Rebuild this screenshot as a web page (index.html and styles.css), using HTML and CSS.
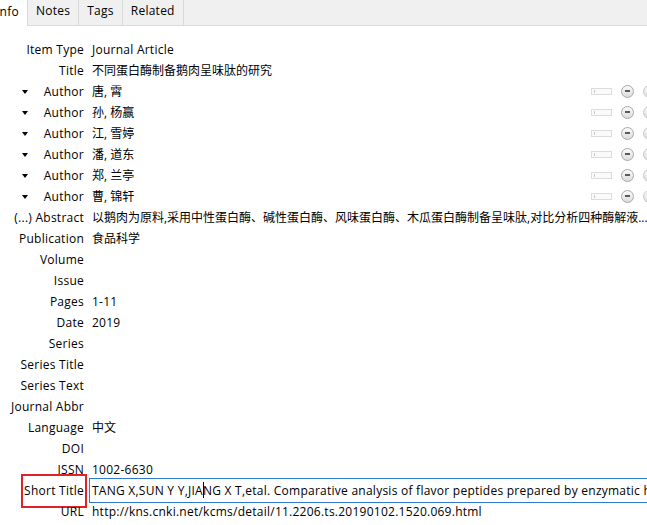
FILE: index.html
```html
<!DOCTYPE html>
<html>
<head>
<meta charset="utf-8">
<link rel="stylesheet" href="styles.css">
</head>
<body>
<div class="pane">
  <div class="tabbar">
    <div class="tab active"><span class="info-label">Info</span></div>
    <div class="tab">Notes</div>
    <div class="tab">Tags</div>
    <div class="tab">Related</div>
  </div>
  <div class="fields">
    <div class="row"><div class="label">Item Type</div><div class="value latin">Journal Article</div></div>
    <div class="row"><div class="label">Title</div><div class="value">不同蛋白酶制备鹅肉呈味肽的研究</div></div>
    <div class="row"><div class="label creator"><span class="twisty"></span><span>Author</span></div><div class="value author"><span>唐, 霄</span><span class="controls"><span class="mode"></span><span class="btn minus"></span><span class="btn plus"></span></span></div></div>
    <div class="row"><div class="label creator"><span class="twisty"></span><span>Author</span></div><div class="value author"><span>孙, 杨赢</span><span class="controls"><span class="mode"></span><span class="btn minus"></span><span class="btn plus"></span></span></div></div>
    <div class="row"><div class="label creator"><span class="twisty"></span><span>Author</span></div><div class="value author"><span>江, 雪婷</span><span class="controls"><span class="mode"></span><span class="btn minus"></span><span class="btn plus"></span></span></div></div>
    <div class="row"><div class="label creator"><span class="twisty"></span><span>Author</span></div><div class="value author"><span>潘, 道东</span><span class="controls"><span class="mode"></span><span class="btn minus"></span><span class="btn plus"></span></span></div></div>
    <div class="row"><div class="label creator"><span class="twisty"></span><span>Author</span></div><div class="value author"><span>郑, 兰亭</span><span class="controls"><span class="mode"></span><span class="btn minus"></span><span class="btn plus"></span></span></div></div>
    <div class="row"><div class="label creator"><span class="twisty"></span><span>Author</span></div><div class="value author"><span>曹, 锦轩</span><span class="controls"><span class="mode"></span><span class="btn minus"></span><span class="btn plus"></span></span></div></div>
    <div class="row"><div class="label">(...) Abstract</div><div class="value clip">以鹅肉为原料,采用中性蛋白酶、碱性蛋白酶、风味蛋白酶、木瓜蛋白酶制备呈味肽,对比分析四种酶解液...</div></div>
    <div class="row"><div class="label">Publication</div><div class="value">食品科学</div></div>
    <div class="row"><div class="label">Volume</div><div class="value"></div></div>
    <div class="row"><div class="label">Issue</div><div class="value"></div></div>
    <div class="row"><div class="label">Pages</div><div class="value latin">1-11</div></div>
    <div class="row"><div class="label">Date</div><div class="value latin">2019</div></div>
    <div class="row"><div class="label">Series</div><div class="value"></div></div>
    <div class="row"><div class="label">Series Title</div><div class="value"></div></div>
    <div class="row"><div class="label">Series Text</div><div class="value"></div></div>
    <div class="row"><div class="label">Journal Abbr</div><div class="value"></div></div>
    <div class="row"><div class="label">Language</div><div class="value">中文</div></div>
    <div class="row"><div class="label">DOI</div><div class="value"></div></div>
    <div class="row"><div class="label">ISSN</div><div class="value latin">1002-6630</div></div>
    <div class="row"><div class="label"><span class="highlight">Short Title</span></div><div class="value"><div class="editor latin">TANG X,SUN Y Y,JIA<span class="caret"></span>NG X T,etal. Comparative analysis of flavor peptides prepared by enzymatic h</div></div></div>
    <div class="row"><div class="label">URL</div><div class="value latin">http://kns.cnki.net/kcms/detail/11.2206.ts.20190102.1520.069.html</div></div>
  </div>
</div>
</body>
</html>
```
FILE: styles.css
```css
html, body {
  margin: 0;
  padding: 0;
  overflow: hidden;
  background: #ffffff;
}
body {
  width: 647px;
  height: 525px;
  font-family: "Segoe UI", "Open Sans", "Noto Sans CJK SC", sans-serif;
  font-size: 12px;
  color: #000000;
}
.pane {
  width: 690px;
}
.tabbar {
  display: flex;
  height: 25px;
  background: #f0f0f0;
  border-bottom: 1px solid #d9d9d9;
}
.tab {
  display: flex;
  align-items: center;
  padding: 0 8px 3px 8px;
  border-right: 1px solid #d9d9d9;
  line-height: 20px;
  letter-spacing: 0.25px;
}
.tab.active {
  background: #ffffff;
  padding-left: 0;
  height: 23px;
  padding-bottom: 3px;
  overflow: hidden;
  width: 19px;
}
.info-label {
  margin-left: -4px;
}
.fields {
  padding-top: 13px;
  display: flex;
  flex-direction: column;
}
.row {
  display: grid;
  grid-template-columns: 84px 1fr;
  column-gap: 8px;
  height: 21px;
  line-height: 21px;
  white-space: nowrap;
}
.label {
  text-align: right;
  letter-spacing: 0.25px;
}
.latin {
  letter-spacing: 0.25px;
}
.label.creator {
  display: flex;
  justify-content: space-between;
  align-items: center;
  padding-left: 22px;
}
.twisty {
  width: 0;
  height: 0;
  border-left: 3.5px solid transparent;
  border-right: 3.5px solid transparent;
  border-top: 4px solid #000;
}
.value.clip {
  overflow: hidden;
  width: 555px;
}
.value.author {
  display: flex;
  justify-content: space-between;
  align-items: center;
  width: 564px;
}
.controls {
  display: flex;
  align-items: center;
  gap: 9px;
}
.mode {
  position: relative;
  width: 19px;
  height: 5px;
  border: 1px solid #dcdcdc;
  background: #fafafa;
}
.mode::before {
  content: "";
  position: absolute;
  left: 2px;
  top: 1px;
  width: 1px;
  height: 3px;
  background: #c8c8c8;
}
.btn {
  position: relative;
  width: 11px;
  height: 11px;
  border: 1px solid #a8a8a8;
  border-radius: 50%;
  background: linear-gradient(#fafafa, #dcdcdc);
}
.btn::before {
  content: "";
  position: absolute;
  left: 3px;
  top: 4px;
  width: 5px;
  height: 2px;
  background: #5a5a5a;
}
.btn.plus {
  border-color: #c8c8c8;
}
.btn.plus::before {
  background: #bbbbbb;
}
.highlight {
  display: inline-block;
  border: 2px solid #e02127;
  line-height: 30px;
  height: 30px;
  padding: 0 1px 0 1px;
  margin-top: -6px;
  margin-right: -3px;
}
.editor {
  margin-left: -3px;
  margin-top: -2px;
  height: 23px;
  line-height: 23px;
  padding-left: 2px;
  border: 1px solid #2f7bd3;
  border-right: none;
  width: 600px;
  overflow: hidden;
  background: #fff;
}
.caret {
  display: inline-block;
  width: 1px;
  height: 16px;
  background: #000;
  vertical-align: -3px;
  margin-right: -1px;
}
```
